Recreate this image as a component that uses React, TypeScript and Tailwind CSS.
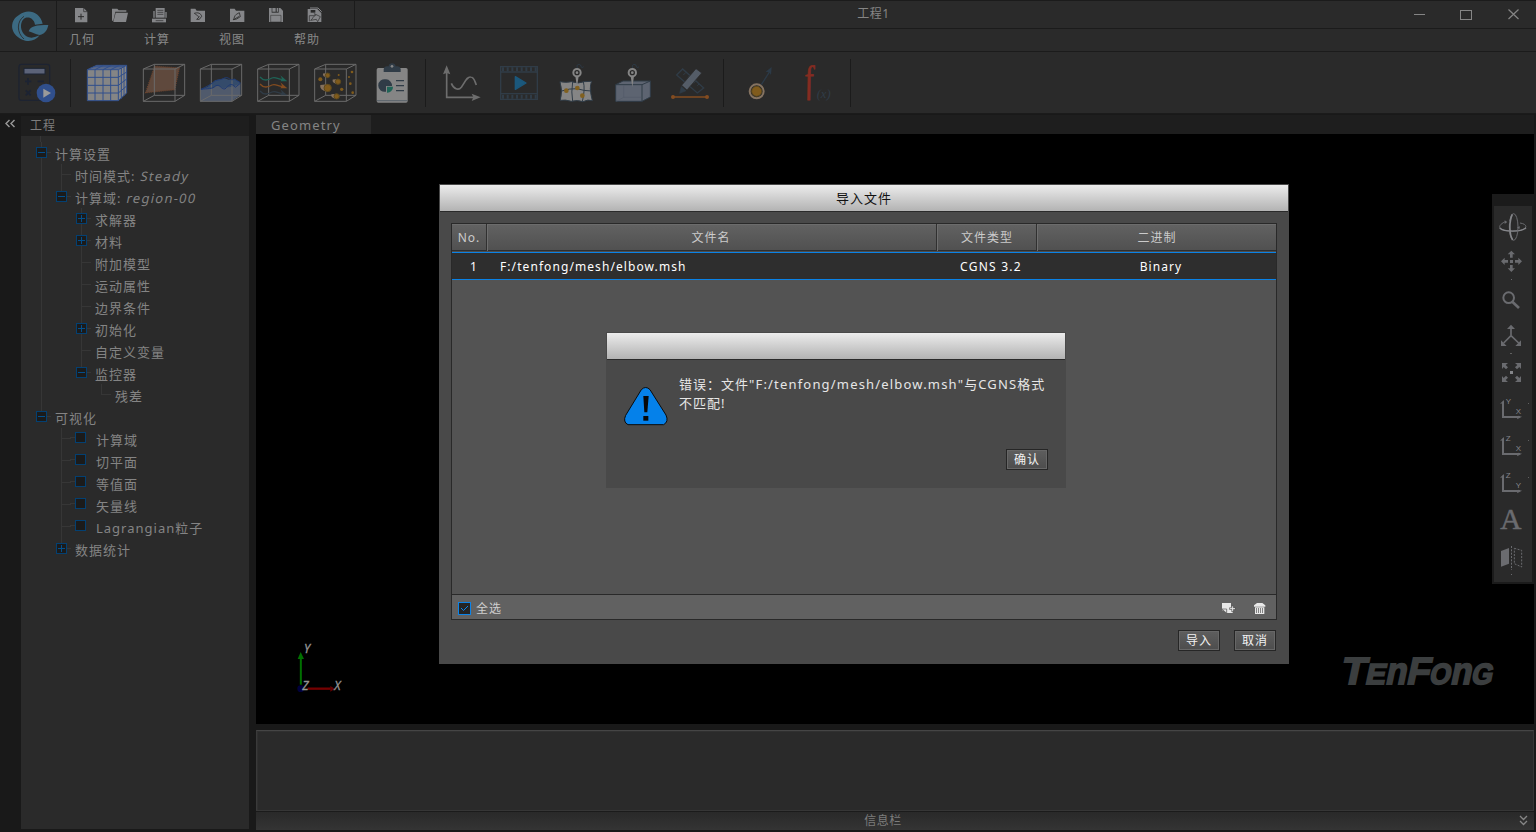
import type { ReactNode } from "react";

const CJK = "font-['Noto_Sans','Noto_Sans_CJK_SC',sans-serif]";

type DrawProps = { w: number; h: number; view: string; children: ReactNode };

function Draw({ w, h, view, children }: DrawProps) {
  return (
    <svg width={w} height={h} viewBox={view} fill="none" className="block shrink-0 overflow-visible">
      {children}
    </svg>
  );
}

/* ---------- title bar ---------- */

function Brand() {
  return (
    <Draw w={56} h={50} view="0 3 168 150">
      <path d="M57 45C80 25 119 32 128 71L105 74C102 55 84 47 71 57C58 70 61 96 78 108C93 117 106 112 119 106C108 120 92 126 76 122C28 108 26 62 57 45Z" fill="#3c6a82" />
      <path d="M86 94C92 78 108 75 145 75C141 94 132 103 118 105C106 103 98 97 86 94Z" fill="#3c6a82" />
      <path d="M72 49C50 63 49 98 72 117" stroke="#2a2a2a" strokeWidth="2.5" />
    </Draw>
  );
}

const QUICK: ReactNode[] = [
  <g key="new">
    <path d="M225 24H251L262 35V67H225Z" fill="#858689" />
    <path d="M251 24V35H262" stroke="#2a2a2a" strokeWidth="2" />
    <path d="M243 41V59M234 50H252" stroke="#2a2a2a" strokeWidth="3" />
  </g>,
  <g key="open">
    <path d="M336 62V26H352L356 31H379V35H346L340 62Z" fill="#858689" />
    <path d="M347 38H384L378 66H340Z" fill="#858689" />
  </g>,
  <g key="log">
    <path d="M467 24H494V53H467Z" fill="#858689" />
    <path d="M472 31H490M472 37H490M472 43H490" stroke="#2a2a2a" strokeWidth="2" />
    <path d="M462 33V53M498 36V53" stroke="#858689" strokeWidth="4" />
    <path d="M456 56H498V67H456Z" fill="#858689" />
    <path d="M467 62H490" stroke="#2a2a2a" strokeWidth="2" />
  </g>,
  <g key="import">
    <path d="M572 66V26H586L590 32H615V66Z" fill="#858689" />
    <path d="M583 40C593 36 603 40 605 49L598 58L590 58L598 50C594 50 590 44 583 40Z" stroke="#2a2a2a" strokeWidth="2.5" />
  </g>,
  <g key="export">
    <path d="M690 66V26H704L708 32H733V66Z" fill="#858689" />
    <path d="M700 59C703 55 703 47 709 43L718 38L721 50L710 57L700 59L718 49" stroke="#2a2a2a" strokeWidth="2.5" />
  </g>,
  <g key="save">
    <path d="M807 24H841L849 32V66H807Z" fill="#858689" />
    <path d="M815 24H836V38H815Z" fill="#2a2a2a" />
    <path d="M817 24H827V35H817ZM830 24H834V35H830Z" fill="#858689" />
    <path d="M812 46H843V66H812Z" stroke="#2a2a2a" strokeWidth="1.5" />
  </g>,
  <g key="saveas">
    <path d="M923 27H952L964 39V66H923Z" fill="#858689" />
    <path d="M930 24H954L965 35" stroke="#858689" strokeWidth="3" />
    <path d="M932 30H946V38H932Z" fill="#2a2a2a" />
    <path d="M928 64V47H946" stroke="#2a2a2a" strokeWidth="2" />
    <path d="M932 61C939 58 937 49 947 46L943 41L961 50L953 65L949 58Z" fill="#858689" stroke="#2a2a2a" strokeWidth="2" />
  </g>,
];

function TitleBar() {
  return (
    <div className="flex h-[51px] w-full border-t border-[#1b1b1b] bg-[#2a2a2a]">
      <div className="w-[57px] shrink-0 border-r border-[#1b1b1b]">
        <Brand />
      </div>
      <div className="flex min-w-0 flex-1 flex-col">
        <div className="flex h-7 border-b border-[#1b1b1b]">
          <div className="flex w-[298px] border-r border-[#1b1b1b] pl-1">
            {QUICK.map((icon, i) => (
              <Draw key={i} w={39} h={27} view={`${(61 + 39 * i) * 3} 3 117 81`}>
                {icon}
              </Draw>
            ))}
          </div>
          <div className="flex flex-1 justify-center pl-px text-[12px] leading-[25px] tracking-[0.5px] text-[#858585]">工程1</div>
          <Draw w={145} h={27} view="0 0 145 27">
            <path d="M23 13.5H34" stroke="#858585" />
            <rect x="69.5" y="9.5" width="11" height="9" stroke="#858585" />
            <path d="M117.5 8.5L127.5 18M127.5 8.5L117.5 18" stroke="#858585" strokeWidth="1.2" />
          </Draw>
        </div>
        <div className="flex h-[22px] pl-[12px] text-[12px] leading-[22px] tracking-[1px] text-[#888]">
          {["几何", "计算", "视图", "帮助"].map((m) => (
            <span key={m} className="w-[75px]">
              {m}
            </span>
          ))}
        </div>
      </div>
    </div>
  );
}

/* ---------- tool bar ---------- */

function Cage({ x }: { x: number }) {
  return (
    <path
      transform={`translate(${x} 0)`}
      d="M0 210H95V307H0ZM0 210L33 196H124V289L95 307M95 210L124 196M33 196V289L0 307M33 289H124"
      stroke="#6a6a6a"
      strokeWidth="3"
    />
  );
}

function Wave({ y, color }: { y: number; color: string }) {
  return (
    <g transform={`translate(0 ${y})`}>
      <path d="M780 -4C792 10 804 5 816 -1C828 -6 835 5 849 3" stroke={color} strokeWidth="4" />
      <path d="M841 -9L862 9L841 9L846 1Z" fill={color} />
    </g>
  );
}

const PARTICLES = [
  [983, 229, 7], [961, 241, 6], [1014, 248, 8], [1047, 234, 3], [983, 267, 11],
  [1025, 271, 5], [1051, 254, 4], [1010, 292, 8], [1056, 219, 4], [1058, 281, 4],
  [1016, 228, 3],
];

const FIELD_TOOLS: ReactNode[] = [
  <g key="mesh">
    <path d="M262 212L290 199H380V282L355 305H262Z" fill="#858585" />
    <path
      d="M262 212H355V305H262ZM262 235H355M262 259H355M262 282H355M285 212V305M309 212V305M332 212V305M262 212L290 199H380V282L355 305M355 212L380 199M272 207H364M281 203H372M285 212L310 199M309 212L334 199M332 212L358 199M364 207V299M372 203V291M355 235L380 219M355 259L380 240M355 282L380 261"
      stroke="#304f8c"
      strokeWidth="3"
    />
  </g>,
  <g key="plane">
    <path d="M464 202L538 207L524 272L437 281Z" fill="#5f493d" stroke="#6d442e" strokeWidth="4" strokeDasharray="3 3" />
    <Cage x={430} />
  </g>,
  <g key="iso">
    <path d="M602 271L623 263L645 244L674 238L686 242L704 240L721 251V288L694 307H602Z" fill="#344b6b" />
    <path d="M602 273C622 263 629 271 640 267C650 257 661 261 670 268C684 264 698 267 721 253V288L694 307H602Z" fill="#505a6c" />
    <Cage x={601} />
    <path d="M603 271C620 263 631 257 640 250C647 240 660 246 676 236C689 234 689 247 703 240L721 251M603 271C624 268 637 271 646 261C661 253 661 271 675 270C685 260 694 248 706 265L721 253" stroke="#203b74" strokeWidth="3" />
  </g>,
  <g key="stream">
    <Cage x={773} />
    <Wave y={238} color="#1f6457" />
    <Wave y={259} color="#834c20" />
    <Wave y={280} color="#303c47" />
  </g>,
  <g key="particles">
    <Cage x={944} />
    {PARTICLES.map(([x, y, r], i) => (
      <g key={i}>
        {r > 6 && <path d={`M${x - r * 2} ${y - r * 0.8}Q${x - r * 2.4} ${y + r * 0.6} ${x} ${y + r}V${y - r}Z`} fill="#85715c" />}
        <circle cx={x} cy={y} r={r} fill="#805b1c" stroke={r > 6 ? "#5b481e" : "none"} strokeWidth="3" />
      </g>
    ))}
  </g>,
  <g key="report">
    <rect x="1130" y="207" width="93" height="104" rx="5" fill="#858585" />
    <path d="M1131 305H1222" stroke="#59636b" strokeWidth="3" />
    <path d="M1151 210Q1152 203 1160 202H1166C1166 190 1187 190 1187 202H1193Q1201 203 1202 210V219H1151Z" fill="#303c47" />
    <circle cx="1176" cy="202" r="4" fill="#858585" />
    <path d="M1158 241A19 19 0 1 0 1158 278V261H1176A19 19 0 0 0 1158 241Z" fill="#303c47" />
    <path d="M1161 263H1179A17 17 0 0 1 1161 281Z" fill="#1f6457" />
    <path d="M1188 245H1212M1188 260H1212M1188 275H1212" stroke="#303c47" strokeWidth="4" />
  </g>,
];

function Pin({ x }: { x: number }) {
  return (
    <g transform={`translate(${x} 0)`}>
      <path d="M1 57C-4 40 15 47 12 53C15 57 18 55 20 53" stroke="#2c3a47" strokeWidth="3" />
      <path d="M-5 82L0 114L5 82Z" fill="#858585" />
      <circle cy="71" r="11" fill="#2a2a2a" stroke="#858585" strokeWidth="6" />
      <circle cy="71" r="4" fill="#858585" />
    </g>
  );
}

const VIEW_TOOLS: ReactNode[] = [
  <g key="plot">
    <path d="M80 66V145H163" stroke="#6d6d6d" strokeWidth="5" />
    <path d="M80 49L91 76L80 72L69 76ZM182 145L155 156L160 145L155 134Z" fill="#6d6d6d" />
    <path d="M94 103C101 120 115 126 124 115C137 96 141 83 152 84C163 84 165 100 169 108" stroke="#6d6d6d" strokeWidth="5" />
  </g>,
  <g key="film">
    <path d="M242 53H352V151H242ZM242 69H352M242 134H352" stroke="#303c47" strokeWidth="4" />
    <path d="M246 61H350M246 143H350" stroke="#303c47" strokeWidth="12" strokeDasharray="6 8" />
    <path d="M286 83L318 102L286 121Z" fill="#1b587c" stroke="#1b587c" strokeWidth="4" strokeLinejoin="round" />
  </g>,
  <g key="map">
    <path d="M420 98Q438 102 455 98Q475 106 492 98L515 97Q506 113 517 155Q504 150 489 158Q472 152 454 157Q435 151 421 154Q429 124 420 98Z" fill="#858585" stroke="#303c47" strokeWidth="3" />
    <path d="M458 98Q453 130 458 157M490 98Q496 120 487 158M425 126Q449 118 471 119Q492 126 514 126" stroke="#303c47" strokeWidth="3" />
    <circle cx="439" cy="125" r="7" fill="#80601f" />
    <circle cx="472" cy="117" r="7" fill="#80601f" />
    <circle cx="487" cy="140" r="7" fill="#80601f" />
    <Pin x={471} />
  </g>,
  <g key="box">
    <path d="M587 107L609 96H691V144L666 157H587Z" fill="#5d6471" stroke="#303c47" strokeWidth="3" />
    <path d="M587 107H666V157M666 107L691 96" stroke="#303c47" strokeWidth="3" />
    <path d="M611 108V145L589 157M611 145H664" stroke="#535b68" strokeWidth="2" />
    <Pin x={637} />
  </g>,
  <g key="ruler">
    <path d="M770 78L788 60L851 117L832 132Z" stroke="#303c47" strokeWidth="4" />
    <path d="M798 70L790 78M809 80L804 86M827 96L820 103M837 105L832 110" stroke="#303c47" strokeWidth="3" />
    <path d="M828 59L845 72L801 123L785 109Z" fill="#545c67" stroke="#2a2a2a" strokeWidth="2" />
    <path d="M784 113L798 125L779 133Z" fill="#303c47" stroke="#303c47" strokeWidth="2" />
    <path d="M759 144H861" stroke="#834c20" strokeWidth="5" />
    <circle cx="759" cy="144" r="6" fill="#834c20" />
    <circle cx="861" cy="144" r="6" fill="#834c20" />
  </g>,
];

function Separator({ className }: { className: string }) {
  return <div className={`h-12 w-px shrink-0 bg-[#1b1b1b] ${className}`} />;
}

function ToolBar() {
  return (
    <div className="flex h-[63px] w-full items-center border-t border-b-[1px] border-[#1b1b1b] bg-[#2a2a2a] pl-[9px]">
      <Draw w={57} h={48} view="27 180 171 144">
        <rect x="57" y="196" width="92" height="108" rx="7" stroke="#1d2331" strokeWidth="4" />
        <rect x="72" y="208" width="63" height="17" fill="#5c6378" stroke="#1c2434" strokeWidth="3" />
        <path d="M75 247H94M84 237V257M113 247H132M77 274L92 289M92 274L77 289" stroke="#1c2333" strokeWidth="5" />
        <circle cx="138" cy="282" r="28" fill="#304f8c" />
        <path d="M130 269L153 282L130 296Z" fill="#9a9a9a" />
      </Draw>
      <Separator className="ml-1 mr-2" />
      {FIELD_TOOLS.map((icon, i) => (
        <Draw key={i} w={57} h={48} view={`${(79 + 57 * i) * 3} 180 171 144`}>
          {icon}
        </Draw>
      ))}
      <Separator className="ml-1 mr-2" />
      {VIEW_TOOLS.map((icon, i) => (
        <Draw key={i} w={57} h={48} view={`${(14 + 57 * i) * 3} 30 171 144`}>
          {icon}
        </Draw>
      ))}
      <Separator className="ml-1 mr-[5px]" />
      <Draw w={57} h={48} view="927 30 171 144">
        <path d="M1024 107L1049 68" stroke="#2c3a47" strokeWidth="4" />
        <path d="M1055 54L1053 78L1047 70L1037 68Z" fill="#2c3a47" />
        <circle cx="1010" cy="127" r="21" fill="#2a2a2a" stroke="#857361" strokeWidth="6" />
        <circle cx="1010" cy="127" r="15" fill="#805b1c" stroke="#5b481e" strokeWidth="3" />
      </Draw>
      <Draw w={60} h={48} view="1098 30 180 144">
        <text transform="translate(1158 130) skewX(7) scale(0.8 1)" fill="#852c21" stroke="#852c21" strokeWidth="2" className="font-['Liberation_Serif',serif] text-[114px] italic">
          f
        </text>
        <text x="1190" y="147" fill="#303c47" className="font-['Liberation_Serif',serif] text-[38px] italic">
          (x)
        </text>
      </Draw>
      <Separator className="ml-1" />
    </div>
  );
}

/* ---------- project tree ---------- */

type Cell = "gap" | "line" | "tee" | "end" | "plus" | "minus" | "minusTop" | "minusEnd" | "plusEnd" | "check";
type Node = { cells: Cell[]; label: string; value?: string };

const TREE: Node[] = [
  { cells: ["minusTop"], label: "计算设置" },
  { cells: ["line", "tee"], label: "时间模式:", value: "Steady" },
  { cells: ["line", "minusEnd"], label: "计算域:", value: "region-00" },
  { cells: ["line", "gap", "plus"], label: "求解器" },
  { cells: ["line", "gap", "plus"], label: "材料" },
  { cells: ["line", "gap", "tee"], label: "附加模型" },
  { cells: ["line", "gap", "tee"], label: "运动属性" },
  { cells: ["line", "gap", "tee"], label: "边界条件" },
  { cells: ["line", "gap", "plus"], label: "初始化" },
  { cells: ["line", "gap", "tee"], label: "自定义变量" },
  { cells: ["line", "gap", "minusEnd"], label: "监控器" },
  { cells: ["line", "gap", "gap", "end"], label: "残差" },
  { cells: ["minusEnd"], label: "可视化" },
  { cells: ["gap", "tee", "check"], label: "计算域" },
  { cells: ["gap", "tee", "check"], label: "切平面" },
  { cells: ["gap", "tee", "check"], label: "等值面" },
  { cells: ["gap", "tee", "check"], label: "矢量线" },
  { cells: ["gap", "tee", "check"], label: "Lagrangian粒子" },
  { cells: ["gap", "plusEnd"], label: "数据统计" },
];

function TreeCell({ kind }: { kind: Cell }) {
  const box = kind.startsWith("plus") || kind.startsWith("minus");
  const full = kind === "line" || kind === "tee" || kind === "plus" || kind === "minusTop";
  const half = kind === "end" || kind === "minusEnd" || kind === "plusEnd";
  const stub = kind !== "gap" && kind !== "line" && kind !== "check";
  return (
    <Draw w={20} h={22} view="0 0 20 22">
      {full && <path d="M5.5 0V22" stroke="#363636" />}
      {half && <path d="M5.5 0V11" stroke="#363636" />}
      {stub && <path d="M5.5 10.5H15" stroke="#363636" />}
      {box && <rect x="0.5" y="5.5" width="10" height="10" fill="#1b1b1b" stroke="#034072" />}
      {box && <path d="M2 10.5H9" stroke="#034f8c" />}
      {kind.startsWith("plus") && <path d="M5.5 7V14" stroke="#034f8c" />}
      {kind === "check" && <path d="M-6 9.5H-1" stroke="#363636" />}
      {kind === "check" && <rect x="-0.5" y="4.5" width="10" height="10" fill="#1b1b1b" stroke="#034072" />}
    </Draw>
  );
}

function ProjectTree() {
  return (
    <aside className="flex w-[228px] shrink-0 flex-col pt-[2px] pb-[3px]">
      <div className="h-5 bg-[#1e1e1e] pl-[9px] text-[12px] leading-[19px] tracking-[1px] text-[#7d7d7d]">工程</div>
      <div className="flex-1 bg-[#2a2a2a] pl-[15px]">
        <div className="ml-[4px] h-[6px] w-px bg-[#363636]" />
        {TREE.map((n, i) => (
          <div key={i} className="flex h-[22px] text-[13px] leading-[24px] tracking-[1px] whitespace-nowrap text-[#848484]">
            {n.cells.map((c, j) => (
              <TreeCell key={j} kind={c} />
            ))}
            <span className={n.cells.includes("check") ? "" : "-ml-px"}>{n.label}</span>
            {n.value && <span className="ml-[6px] inline-block -skew-x-12 tracking-[1.25px]">{n.value}</span>}
          </div>
        ))}
      </div>
    </aside>
  );
}

/* ---------- viewport ---------- */

type Rail = { h: number; y: number; icon: ReactNode };

function PlaneIcon({ y, a, b }: { y: number; a: string; b: string }) {
  return (
    <g transform={`translate(0 ${y})`}>
      <path d="M99 7V53H150" stroke="#6a6b6f" strokeWidth="6" />
      <path d="M90 13L102 2V12ZM141 60L156 52L144 49Z" fill="#6a6b6f" />
      <text x="107" y="15" fill="#85868a" className="font-['Liberation_Sans',sans-serif] text-[24px]">
        {a}
      </text>
      <text x="137" y="45" fill="#85868a" className="font-['Liberation_Sans',sans-serif] text-[24px]">
        {b}
      </text>
      <rect x="174" y="11" width="3" height="3" fill="#606060" />
    </g>
  );
}

const RAIL: Rail[] = [
  {
    h: 39,
    y: 78,
    icon: (
      <g>
        <path d="M108 124C78 137 83 153 128 153C174 153 178 133 150 129" stroke="#6a6b6f" strokeWidth="3" />
        <path d="M89 144C101 156 154 157 168 143" stroke="#85868a" strokeWidth="4" />
        <ellipse cx="131" cy="141" rx="13" ry="40" stroke="#6a6b6f" strokeWidth="3" strokeDasharray="98 7" />
        <path d="M127 103C117 123 117 163 128 180" stroke="#85868a" strokeWidth="5" />
        <path d="M104 121L112 126L104 132ZM141 142L150 139L148 148Z" fill="#6a6b6f" />
      </g>
    ),
  },
  {
    h: 36,
    y: 195,
    icon: (
      <g fill="#6a6b6f">
        <path d="M124 212L135 223H128V233H120V223H113ZM124 276L135 265H128V255H120V265H113ZM93 244L104 233V240H114V248H104V255ZM156 244L145 233V240H135V248H145V255Z" />
        <rect x="120" y="240" width="9" height="9" />
        <rect x="123" y="297" width="3" height="3" />
      </g>
    ),
  },
  {
    h: 37,
    y: 303,
    icon: (
      <g stroke="#6a6b6f">
        <circle cx="116" cy="353" r="16" strokeWidth="6" />
        <path d="M127 365L147 384" strokeWidth="8" />
      </g>
    ),
  },
  {
    h: 37,
    y: 414,
    icon: (
      <g>
        <path d="M123 445V467L101 489M123 467L146 489" stroke="#6a6b6f" strokeWidth="5" />
        <path d="M123 434L135 447H111ZM93 481V498H110ZM153 481V498H136Z" fill="#6a6b6f" />
        <rect x="120" y="519" width="6" height="3" fill="#606060" />
      </g>
    ),
  },
  {
    h: 36,
    y: 525,
    icon: (
      <g>
        <path d="M96 549H114L107 555L114 562L108 568L101 561L96 567ZM153 549H135L142 555L135 562L141 568L148 561L153 567ZM96 606H114L107 600L114 593L108 587L101 594L96 588ZM153 606H135L142 600L135 593L141 587L148 594L153 588Z" fill="#6a6b6f" />
        <rect x="120" y="573" width="9" height="9" fill="#85868a" />
      </g>
    ),
  },
  { h: 37, y: 633, icon: <PlaneIcon y={658} a="Y" b="X" /> },
  { h: 37, y: 744, icon: <PlaneIcon y={769} a="Z" b="X" /> },
  { h: 37, y: 855, icon: <PlaneIcon y={880} a="Z" b="Y" /> },
  {
    h: 37,
    y: 966,
    icon: (
      <text x="91" y="1048" fill="#6a6b6f" stroke="#6a6b6f" strokeWidth="1.5" className="font-['Liberation_Serif',serif] text-[88px]">
        A
      </text>
    ),
  },
  {
    h: 43,
    y: 1077,
    icon: (
      <g>
        <path d="M93 1113L117 1104V1151L93 1160Z" fill="#6a6b6f" />
        <path d="M124.500 1098V1170" stroke="#6a6b6f" strokeWidth="3" strokeDasharray="6 4" />
        <path d="M133 1105L155 1111V1161L133 1151Z" stroke="#6a6b6f" strokeWidth="3" strokeDasharray="6 4" />
        <rect x="123" y="1182" width="3" height="3" fill="#6a6b6f" />
      </g>
    ),
  },
];

function ViewRail() {
  return (
    <div className="absolute top-[60px] right-0 h-[390px] w-[42px] border-2 border-t-[12px] border-[#1b1b1b] bg-[#2a2a2a]">
      {RAIL.map((r) => (
        <Draw key={r.y} w={38} h={r.h} view={`72 ${r.y} 114 ${r.h * 3}`}>
          {r.icon}
        </Draw>
      ))}
    </div>
  );
}

const WORDMARK = [
  { x: 9, len: 25, glyph: "T", size: "text-[38px]" },
  { x: 34, len: 20, glyph: "E", size: "text-[29px]" },
  { x: 54, len: 21, glyph: "n", size: "text-[38px]" },
  { x: 75, len: 23, glyph: "F", size: "text-[38px]" },
  { x: 98, len: 21, glyph: "O", size: "text-[29px]" },
  { x: 119, len: 21, glyph: "n", size: "text-[38px]" },
  { x: 140, len: 21, glyph: "G", size: "text-[29px]" },
];

function Viewport() {
  return (
    <div className="relative h-[590px] bg-black">
      <div className="absolute top-[500px] left-[34px]">
        <Draw w={60} h={60} view="150 42 180 180">
          <circle cx="182" cy="206" r="10" fill="#00003c" />
          <path d="M182.500 194V110" stroke="#007000" strokeWidth="6" />
          <path d="M182 96L192 117H173Z" fill="#007000" />
          <path d="M203 206H272" stroke="#750000" strokeWidth="7" />
          <path d="M271 198L285 206L271 215Z" fill="#600000" />
          <g fill="#949494" stroke="#949494" strokeWidth="0.8" className="font-['Noto_Sans',sans-serif] text-[36px] italic">
            <text x="192" y="98">Y</text>
            <text x="187" y="209">Z</text>
            <text x="283" y="209">X</text>
          </g>
        </Draw>
      </div>
      <div className="absolute top-[510px] left-[1072px]">
        <Draw w={180} h={60} view="-10 -5 180 60">
          <g fill="#3b3e3f" stroke="#3b3e3f" strokeWidth="1.8" transform="skewX(-12)" className="font-['Liberation_Sans',sans-serif] font-bold">
            {WORDMARK.map((c) => (
              <text key={c.x} x={c.x} y="35.5" textLength={c.len} lengthAdjust="spacingAndGlyphs" className={c.size}>
                {c.glyph}
              </text>
            ))}
          </g>
        </Draw>
      </div>
      <ViewRail />
    </div>
  );
}

function Workspace() {
  return (
    <main className="ml-[7px] flex w-[1278px] flex-col pt-px">
      <div className="flex h-[19px] bg-[#1e1e1e]">
        <div className="w-[115px] bg-[#2a2a2a] pl-[15px] text-[13px] leading-[20px] tracking-[1.1px] text-[#858585]">Geometry</div>
      </div>
      <Viewport />
      <div className="mt-[6px] h-[81px] border border-t-[#454545] border-r-[#363636] border-b-[#363636] border-l-[#3a3a3a] bg-[#2a2a2a] shadow-[inset_1px_1px_0_#303030]" />
      <div className="flex h-[19px] items-center border-t border-[#1b1b1b] bg-linear-to-b from-[#292929] to-[#343434] text-[12px] leading-[18px] tracking-[0.5px] text-[#7d7d7d]">
        <span className="flex-1 text-center">
          <span className="-ml-[6px]">信息栏</span>
        </span>
        <Draw w={18} h={18} view="0 0 18 18">
          <path d="M4 4L7.500 7.500L11 4M4 9L7.500 12.500L11 9" stroke="#868686" strokeWidth="1.300" />
        </Draw>
      </div>
    </main>
  );
}

/* ---------- dialogs ---------- */

function Button({ children }: { children: ReactNode }) {
  return (
    <button className="h-[21px] w-[42px] border border-[#262626] bg-linear-to-b from-[#5e5e5e] to-[#4d4d4d] text-center text-[12px] leading-[19px] tracking-[1px] text-[#f2f2f2] shadow-[inset_0_0_0_1px_#676767]">
      {children}
    </button>
  );
}

function DialogTitle({ children }: { children?: ReactNode }) {
  return (
    <div className="h-[27px] border-b border-[#2a2a2a] bg-linear-to-b from-[#ececec] to-[#b3b3b3] text-center text-[13px] leading-[27px] tracking-[1px] text-[#111]">
      {children}
    </div>
  );
}

function ErrorDialog() {
  return (
    <section className="absolute top-[332px] left-[606px] flex h-[156px] w-[460px] flex-col border border-[#494949] bg-[#494949]">
      <DialogTitle />
      <div className="flex pt-[15px] pl-[17px]">
        <div className="pt-[10px]">
          <Draw w={44} h={42} view="71 179 132 126">
            <path d="M123 193Q136 180 149 193L197 269Q206 289 190 298H83Q67 290 76 270Z" fill="#0581ea" stroke="#0b0b0b" strokeWidth="3" />
            <path d="M129 212H145L141 261H132Z" fill="#080808" />
            <rect x="129" y="272" width="15" height="14" fill="#080808" />
          </Draw>
        </div>
        <p className="ml-[11px] text-[13px] leading-[19px] tracking-[1px] whitespace-nowrap text-[#e6e6e6]">
          错误：文件<span className="tracking-[1.18px]">"F:/tenfong/mesh/elbow.msh"</span>与<span className="tracking-[1.18px]">CGNS</span>格式
          <br />
          不匹配!
        </p>
      </div>
      <div className="mt-auto flex justify-end pr-[17px] pb-[17px]">
        <Button>确认</Button>
      </div>
    </section>
  );
}

const COLS = "grid grid-cols-[35px_450px_100px_239px] text-center text-[12px]";

function ImportDialog() {
  return (
    <section className="absolute top-[184px] left-[439px] flex h-[480px] w-[850px] flex-col border border-[#494949] bg-[#494949]">
      <DialogTitle>导入文件</DialogTitle>
      <div className="mx-[11px] mt-[11px] flex h-[397px] flex-col border border-[#292929] bg-[#535353]">
        <div className={`${COLS} h-7 border-b border-[#4c4c4c] bg-linear-to-b from-[#626262] to-[#505050] leading-[27px] tracking-[1px] text-[#cbcbcb] shadow-[inset_0_1px_0_#6c6c6c,inset_0_-1px_0_#2e2e2e]`}>
          <div className="mb-px border-r border-[#303030]">No.</div>
          <div className="mb-px border-r border-l border-r-[#303030] border-l-[#6e6e6e] pr-[2px]">文件名</div>
          <div className="mb-px border-r border-l border-r-[#303030] border-l-[#6e6e6e]">文件类型</div>
          <div className="mb-px border-l border-[#6e6e6e]">二进制</div>
        </div>
        <div className={`${COLS} h-7 border-t border-b border-[#0a82e6] bg-[#2e2e2e] leading-[28px] tracking-[1.08px] text-white`}>
          <div className="pl-[9px]">1</div>
          <div className="pl-[13px] text-left">F:/tenfong/mesh/elbow.msh</div>
          <div className="pl-[8px] tracking-[1.25px]">CGNS 3.2</div>
          <div className="pl-[9px]">Binary</div>
        </div>
        <div className="mt-auto flex h-[25px] items-center border-t border-[#292929] bg-[#616161] pl-[6px]">
          <div className="pt-[2px]">
            <Draw w={13} h={13} view="0 0 13 13">
              <rect x="0.500" y="0.500" width="12" height="12" fill="#242424" stroke="#0b84ea" />
              <path d="M3 6L5.500 8.500L10 4" stroke="#0b84ea" />
            </Draw>
          </div>
          <span className="ml-[5px] pt-[3px] text-[12px] leading-[24px] tracking-[1px] text-[#cfcfcf]">全选</span>
          <div className="ml-auto pt-[2px] pr-[6px]">
            <Draw w={52} h={16} view="354 60 156 48">
              <path d="M366 69H393V80H398V99H380V91H366Z" fill="#e8e8e8" />
              <path d="M366 87L380 100V87Z" fill="#e8e8e8" stroke="#555" strokeWidth="2" />
              <path d="M398 77V96M388 86H407" stroke="#555" strokeWidth="7" />
              <path d="M398 79V94M390 86H405" stroke="#e8e8e8" strokeWidth="3" />
              <path d="M462 80V76L471 69H487L496 76V80ZM465 82H493V102H465Z" fill="#e8e8e8" />
              <path d="M469.500 84V99M475.500 84V99M481.500 84V99M487.500 84V99" stroke="#505050" strokeWidth="2" />
            </Draw>
          </div>
        </div>
      </div>
      <div className="mt-[10px] flex justify-end gap-[14px] pr-3">
        <Button>导入</Button>
        <Button>取消</Button>
      </div>
    </section>
  );
}

export default function App() {
  return (
    <div className={`relative flex h-[832px] w-[1536px] flex-col overflow-hidden bg-[#191919] ${CJK}`}>
      <TitleBar />
      <ToolBar />
      <div className="flex h-[718px]">
        <div className="w-[21px] shrink-0 pt-[5px] pl-1">
          <Draw w={12} h={10} view="0 0 12 10">
            <path d="M5.500 1L2 4.500L5.500 8M10.500 1L7 4.500L10.500 8" stroke="#9a9a9a" strokeWidth="1.400" />
          </Draw>
        </div>
        <ProjectTree />
        <Workspace />
      </div>
      <ImportDialog />
      <ErrorDialog />
    </div>
  );
}
